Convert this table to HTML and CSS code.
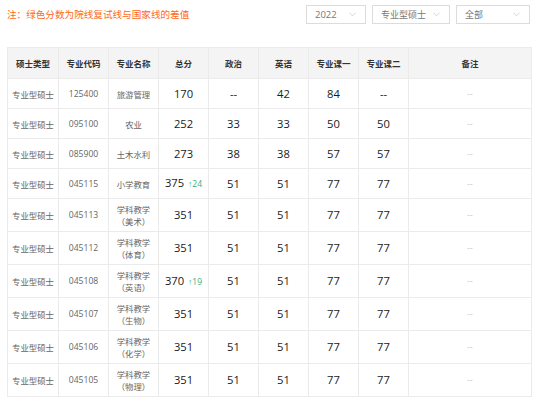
FILE: index.html
```html
<!DOCTYPE html>
<html lang="zh">
<head>
<meta charset="utf-8">
<link rel="stylesheet" href="styles.css">
</head>
<body>
<div class="page">
  <div class="topbar">
    <div class="note">注：绿色分数为院线复试线与国家线的差值</div>
    <div class="filters">
      <div class="sel sel-year"><span>2022</span><svg class="chev" viewBox="0 0 8 5"><path d="M0.5 0.5 L4 4 L7.5 0.5" fill="none" stroke="#c8c8c8" stroke-width="0.9"/></svg></div>
      <div class="sel sel-type"><span>专业型硕士</span><svg class="chev" viewBox="0 0 8 5"><path d="M0.5 0.5 L4 4 L7.5 0.5" fill="none" stroke="#c8c8c8" stroke-width="0.9"/></svg></div>
      <div class="sel sel-all"><span>全部</span><svg class="chev" viewBox="0 0 8 5"><path d="M0.5 0.5 L4 4 L7.5 0.5" fill="none" stroke="#c8c8c8" stroke-width="0.9"/></svg></div>
    </div>
  </div>
  <table class="scores">
    <colgroup>
      <col class="c50"><col class="c50"><col class="c50"><col class="c50"><col class="c50"><col class="c50"><col class="c50"><col class="c50"><col class="cnote">
    </colgroup>
    <thead>
      <tr><th>硕士类型</th><th>专业代码</th><th>专业名称</th><th>总分</th><th>政治</th><th>英语</th><th>专业课一</th><th>专业课二</th><th>备注</th></tr>
    </thead>
    <tbody>
      <tr><td>专业型硕士</td><td class="code">125400</td><td>旅游管理</td><td class="num">170</td><td class="num">--</td><td class="num">42</td><td class="num">84</td><td class="num">--</td><td class="rem">--</td></tr>
      <tr><td>专业型硕士</td><td class="code">095100</td><td>农业</td><td class="num">252</td><td class="num">33</td><td class="num">33</td><td class="num">50</td><td class="num">50</td><td class="rem">--</td></tr>
      <tr><td>专业型硕士</td><td class="code">085900</td><td>土木水利</td><td class="num">273</td><td class="num">38</td><td class="num">38</td><td class="num">57</td><td class="num">57</td><td class="rem">--</td></tr>
      <tr><td>专业型硕士</td><td class="code">045115</td><td>小学教育</td><td class="num">375 <span class="diff">↑24</span></td><td class="num">51</td><td class="num">51</td><td class="num">77</td><td class="num">77</td><td class="rem">--</td></tr>
      <tr><td>专业型硕士</td><td class="code">045113</td><td>学科教学<br>（美术）</td><td class="num">351</td><td class="num">51</td><td class="num">51</td><td class="num">77</td><td class="num">77</td><td class="rem">--</td></tr>
      <tr><td>专业型硕士</td><td class="code">045112</td><td>学科教学<br>（体育）</td><td class="num">351</td><td class="num">51</td><td class="num">51</td><td class="num">77</td><td class="num">77</td><td class="rem">--</td></tr>
      <tr><td>专业型硕士</td><td class="code">045108</td><td>学科教学<br>（英语）</td><td class="num">370 <span class="diff">↑19</span></td><td class="num">51</td><td class="num">51</td><td class="num">77</td><td class="num">77</td><td class="rem">--</td></tr>
      <tr><td>专业型硕士</td><td class="code">045107</td><td>学科教学<br>（生物）</td><td class="num">351</td><td class="num">51</td><td class="num">51</td><td class="num">77</td><td class="num">77</td><td class="rem">--</td></tr>
      <tr><td>专业型硕士</td><td class="code">045106</td><td>学科教学<br>（化学）</td><td class="num">351</td><td class="num">51</td><td class="num">51</td><td class="num">77</td><td class="num">77</td><td class="rem">--</td></tr>
      <tr><td>专业型硕士</td><td class="code">045105</td><td>学科教学<br>（物理）</td><td class="num">351</td><td class="num">51</td><td class="num">51</td><td class="num">77</td><td class="num">77</td><td class="rem">--</td></tr>
    </tbody>
  </table>
</div>
</body>
</html>
```

FILE: styles.css
```css
html, body {
  margin: 0;
  padding: 0;
  background: #fff;
}
body {
  font-family: "Noto Sans CJK SC", "Noto Sans", sans-serif;
  color: #666;
}
.page {
  padding: 5px 8px 0 7px;
}
.topbar {
  display: flex;
  justify-content: space-between;
  align-items: center;
  height: 19px;
}
.note {
  color: #ff6a13;
  font-size: 9.6px;
  line-height: 19px;
  margin-top: -1px;
}
.filters {
  display: flex;
  gap: 6px;
  padding-right: 1px;
}
.sel {
  box-sizing: border-box;
  height: 19px;
  border: 1px solid #dcdcdc;
  display: flex;
  align-items: center;
  justify-content: space-between;
  padding: 0 9px 0 8px;
  font-size: 9px;
  color: #777;
}
.sel-year { width: 60px; font-family: "Open Sans", "Noto Sans", sans-serif; font-size: 9.5px; }
.sel-type { width: 78px; }
.sel-all { width: 74px; }
.chev {
  width: 7px;
  height: 5px;
}
.scores {
  margin-top: 23px;
  border-collapse: collapse;
  table-layout: fixed;
  width: 524px;
}
.c50 { width: 50px; }
.c50:first-child { width: 51px; }
.cnote { width: 123px; }
.scores th, .scores td {
  border: 1px solid #ebebeb;
  text-align: center;
  vertical-align: middle;
  padding: 4px 2px;
}
.scores th {
  background: #f4f4f4;
  height: 22px;
  font-size: 8.5px;
  font-weight: bold;
  color: #333;
}
.scores td {
  height: 21px;
  font-size: 8.4px;
  line-height: 12px;
  color: #666;
}
.scores td.code {
  font-family: "Open Sans", "Noto Sans", sans-serif;
  font-size: 8.6px;
  color: #666;
}
.scores td.num {
  font-family: "Open Sans", "Noto Sans", sans-serif;
  font-size: 11.2px;
  color: #1a1a1a;
}
.scores td.rem {
  font-size: 8px;
  color: #bbb;
}
.diff {
  font-size: 8.5px;
  color: #35b27f;
  margin-left: 1px;
}
```
